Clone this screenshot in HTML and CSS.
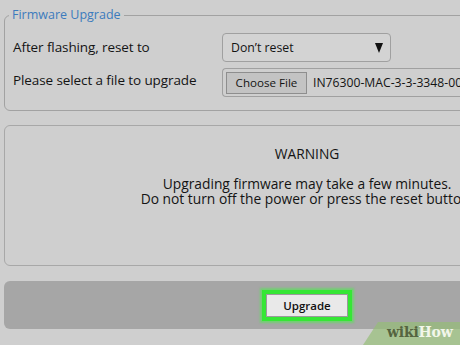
FILE: index.html
```html
<!DOCTYPE html>
<html>
<head>
<meta charset="utf-8">
<link rel="stylesheet" href="styles.css">
</head>
<body>
<div class="page">
  <fieldset class="fw">
    <legend class="fw-legend">Firmware Upgrade</legend>
    <div class="row">
      <span class="label">After flashing, reset to</span>
      <div class="select"><span>Don’t reset</span><svg class="arrow" width="8" height="10" viewBox="0 0 8 10"><path d="M0 0H8L4 10Z" fill="#111"/></svg></div>
    </div>
    <div class="row">
      <span class="label label-up">Please select a file to upgrade</span>
      <div class="file"><span class="file-btn">Choose File</span><span class="fname">IN76300-MAC-3-3-3348-00-01.bin</span></div>
    </div>
  </fieldset>
  <div class="warning">
    <div class="warn-title">WARNING</div>
    <div class="warn-text">Upgrading firmware may take a few minutes.<br>Do not turn off the power or press the reset button.</div>
  </div>
  <div class="actions">
    <button class="upgrade">Upgrade</button>
  </div>
</div>
<div class="wm"><span class="wm-wiki">wiki</span><span class="wm-how">How</span></div>
</body>
</html>
```
FILE: styles.css
```css
html, body {
  margin: 0;
  padding: 0;
  width: 460px;
  height: 345px;
  overflow: hidden;
  background: #cfcfcf;
}
body {
  font-family: "Open Sans", "DejaVu Sans", sans-serif;
  font-size: 13.5px;
  color: #141414;
  position: relative;
}
.page {
  width: 606px;
  margin-left: 4px;
  padding-top: 6px;
}
.fw {
  margin: 0;
  border: 1px solid #a2a2a2;
  border-radius: 6px;
  padding: 0 0 13px 8px;
}
.fw-legend {
  color: #3c7bbd;
  font-size: 12.5px;
  padding: 0 3px;
  margin-left: -4px;
  line-height: 18px;
}
.row {
  display: flex;
  align-items: center;
  height: 29px;
}
.row + .row {
  margin-top: 6px;
}
.fw .row:first-of-type {
  margin-top: 9px;
}
.label {
  width: 209px;
  line-height: 18px;
  margin-top: -2px;
  letter-spacing: -0.1px;
}
.label-up {
  margin-top: -6px;
}
.select {
  box-sizing: border-box;
  width: 169px;
  height: 29px;
  border: 1px solid #a0a0a0;
  border-radius: 4px;
  background: #d3d3d3;
  display: flex;
  align-items: center;
  justify-content: space-between;
  padding: 0 7px 0 8px;
  font-size: 12.3px;
}
.arrow {
  display: block;
}
.file {
  flex: 1;
  height: 29px;
  box-sizing: border-box;
  border: 1px solid #a0a0a0;
  border-radius: 4px 0 0 4px;
  border-right: none;
  display: flex;
  align-items: center;
  padding-left: 3px;
  overflow: hidden;
  white-space: nowrap;
  font-size: 12.2px;
}
.file-btn {
  background: #c3c3c3;
  border: 1px solid #8e8e8e;
  height: 22px;
  line-height: 20px;
  box-sizing: border-box;
  width: 81px;
  text-align: center;
  font-size: 11.6px;
}
.fname {
  margin-left: 6px;
}
.warning {
  margin-top: 14px;
  height: 141px;
  box-sizing: border-box;
  border: 1px solid #a8a8a8;
  border-radius: 6px;
  text-align: center;
  padding-top: 19px;
  font-size: 13.8px;
}
.warn-title {
  line-height: 18px;
}
.warn-text {
  margin-top: 13px;
  line-height: 15px;
}
.actions {
  margin-top: 15px;
  height: 48px;
  background: #a6a6a6;
  border-radius: 6px;
  display: flex;
  align-items: center;
  justify-content: center;
}
.upgrade {
  font-family: inherit;
  font-size: 11.5px;
  font-weight: 600;
  color: #111;
  width: 82px;
  height: 23px;
  background: #e9e9e9;
  border: 1px solid #9a9a9a;
  border-radius: 0;
  padding: 0;
  box-shadow: 0 0 0 4px #35e635, 0 0 2px 6px rgba(80, 235, 80, 0.6);
}
.wm {
  position: absolute;
  right: 0;
  bottom: 0;
  width: 97px;
  height: 23px;
  background: rgba(150, 190, 120, 0.7);
  clip-path: polygon(15px 0, 100% 0, 100% 100%, 0 100%);
  font-family: "DejaVu Serif", serif;
  font-weight: bold;
  font-size: 14px;
  line-height: 21px;
  padding-left: 24px;
  box-sizing: border-box;
  letter-spacing: -0.2px;
}
.wm-wiki {
  color: #55643f;
}
.wm-how {
  color: #f2f6ea;
}
```
